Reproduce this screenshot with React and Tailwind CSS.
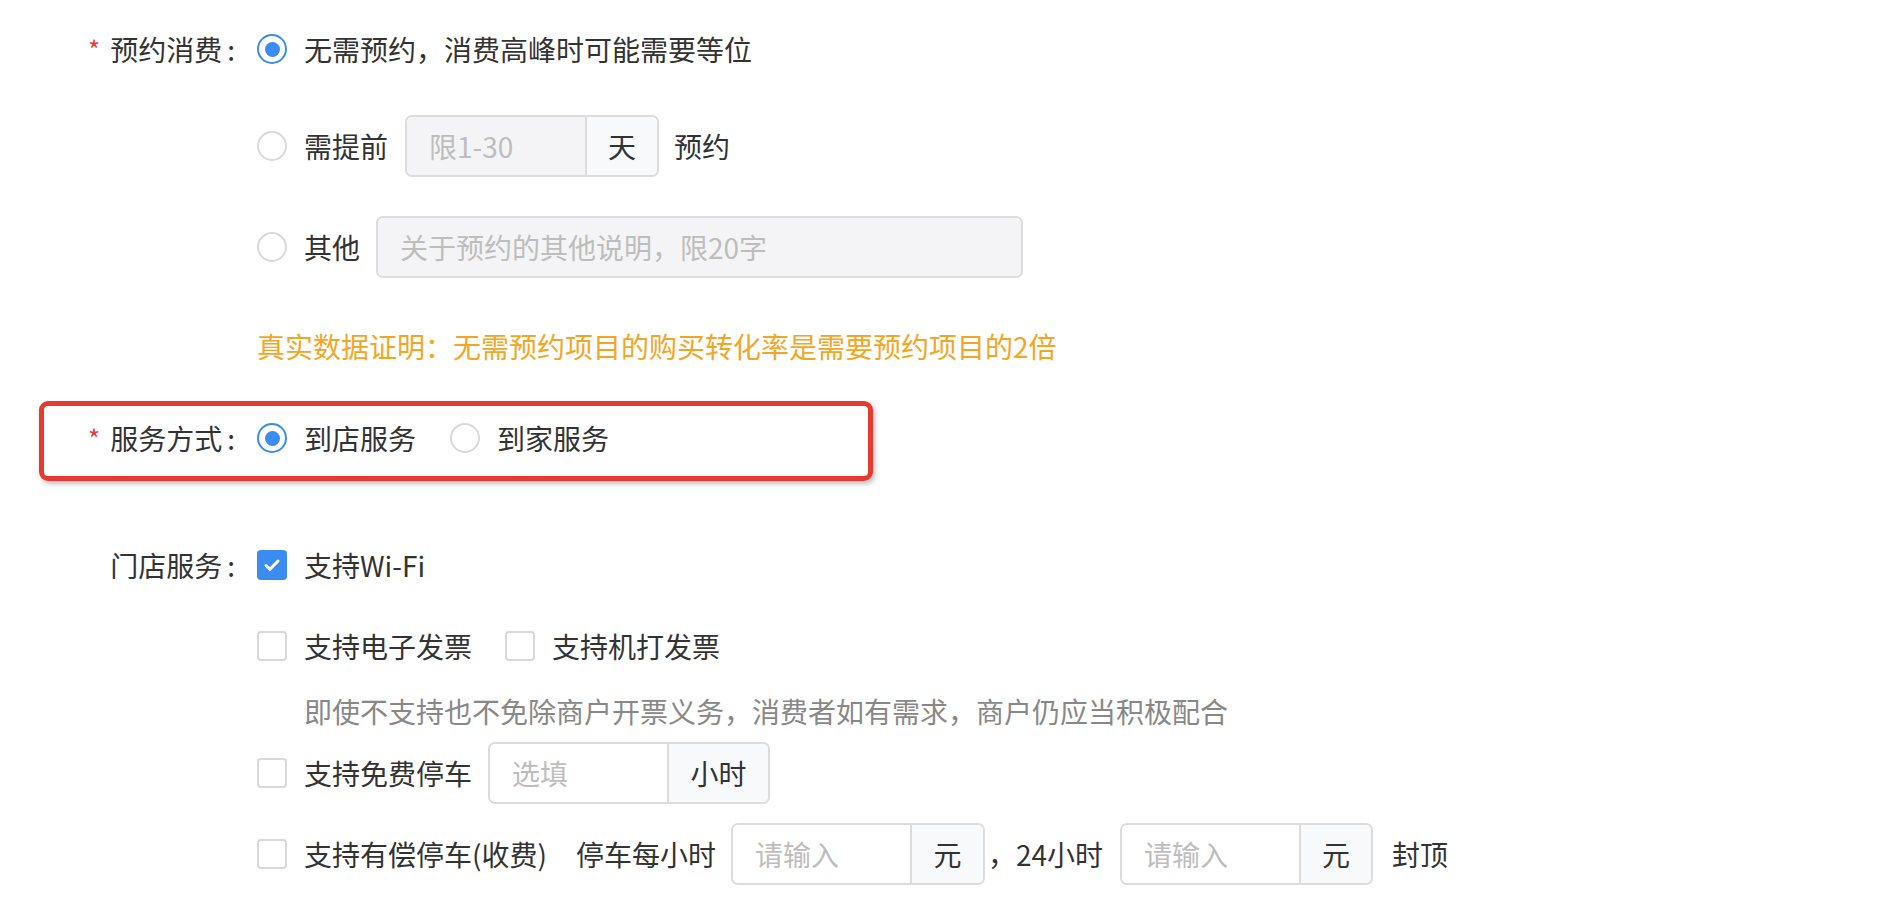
import React from 'react';

const font = { fontFamily: '"Noto Sans CJK SC", "Noto Sans", sans-serif' };

function Radio({ checked, className = '' }) {
  return checked ? (
    <span className={`w-[30px] h-[30px] rounded-full border-[2.5px] border-[#3b8cf0] flex items-center justify-center shrink-0 ${className}`}>
      <span className="block w-[15px] h-[15px] rounded-full bg-[#3b8cf0]" />
    </span>
  ) : (
    <span className={`block w-[30px] h-[30px] rounded-full border-2 border-[#d9d9d9] bg-white shrink-0 ${className}`} />
  );
}

function Checkbox({ checked, className = '' }) {
  return checked ? (
    <span className={`w-[30px] h-[30px] rounded-[4px] bg-[#3b8cf0] flex items-center justify-center shrink-0 ${className}`}>
      <svg width="20" height="20" viewBox="0 0 20 20" fill="none">
        <path d="M4 10.5l4 3.8L16 6" stroke="white" strokeWidth="3" strokeLinecap="round" strokeLinejoin="round" />
      </svg>
    </span>
  ) : (
    <span className={`block w-[30px] h-[30px] rounded-[4px] border-2 border-[#d9d9d9] bg-white shrink-0 ${className}`} />
  );
}

function Label({ text, required }) {
  return (
    <div className="w-[245px] shrink-0 flex justify-end items-center pr-[10px] text-[#333]">
      {required && <span className="text-[#e5413b] mr-[10px] text-[26px]">*</span>}
      <span>{text}</span>
      <span className="ml-[5px]">:</span>
    </div>
  );
}

function InputGroup({ placeholder, addon, inputW, addonW, disabled }) {
  return (
    <div className="flex h-[62px] border-2 border-[#dcdcdc] rounded-[7px] overflow-hidden shrink-0">
      <div
        className={`flex items-center pl-[22px] text-[#bdbdbd] ${disabled ? 'bg-[#f4f4f6]' : 'bg-white'}`}
        style={{ width: inputW }}
      >
        {placeholder}
      </div>
      {addon && (
        <div
          className="flex items-center justify-center border-l-2 border-[#dcdcdc] bg-[#f8f9fb] text-[#333]"
          style={{ width: addonW }}
        >
          {addon}
        </div>
      )}
    </div>
  );
}

export default function App() {
  return (
    <div className="w-[1892px] h-[922px] bg-white text-[28px] leading-none text-[#333] relative overflow-hidden" style={font}>
      <div className="flex flex-col">
        {/* 预约消费 */}
        <div className="flex items-center h-[62px] mt-[18px]">
          <Label text="预约消费" required />
          <div className="flex items-center ml-[12px] gap-[17px]">
            <Radio checked />
            <span>无需预约，消费高峰时可能需要等位</span>
          </div>
        </div>

        <div className="flex items-center h-[62px] mt-[35px] pl-[257px]">
          <Radio />
          <span className="ml-[17px]">需提前</span>
          <div className="ml-[17px]">
            <InputGroup placeholder="限1-30" addon="天" inputW={178} addonW={72} disabled />
          </div>
          <span className="ml-[15px]">预约</span>
        </div>

        <div className="flex items-center h-[62px] mt-[39px] pl-[257px]">
          <Radio />
          <span className="ml-[17px]">其他</span>
          <div className="ml-[16px]">
            <InputGroup placeholder="关于预约的其他说明，限20字" inputW={643} disabled />
          </div>
        </div>

        <div className="flex items-center h-[62px] mt-[37px] pl-[257px] text-[#f5a524]">
          真实数据证明：无需预约项目的购买转化率是需要预约项目的2倍
        </div>

        {/* 服务方式 */}
        <div className="flex items-center h-[62px] mt-[30px] relative">
          <div className="absolute left-[39px] top-[-6px] w-[834px] h-[80px] border-[5px] border-[#e63a2e] rounded-[9px] shadow-[2px_3px_5px_rgba(0,0,0,0.25)]" />
          <Label text="服务方式" required />
          <div className="flex items-center ml-[12px]">
            <Radio checked />
            <span className="ml-[17px]">到店服务</span>
            <Radio className="ml-[34px]" />
            <span className="ml-[17px]">到家服务</span>
          </div>
        </div>

        {/* 门店服务 */}
        <div className="flex items-center h-[62px] mt-[65px]">
          <Label text="门店服务" />
          <div className="flex items-center ml-[12px]">
            <Checkbox checked />
            <span className="ml-[17px]">支持Wi-Fi</span>
          </div>
        </div>

        <div className="flex items-center h-[62px] mt-[19px] pl-[257px]">
          <Checkbox />
          <span className="ml-[17px]">支持电子发票</span>
          <Checkbox className="ml-[33px]" />
          <span className="ml-[17px]">支持机打发票</span>
        </div>

        <div className="flex items-center h-[40px] mt-[14px] pl-[304px] text-[#888]">
          即使不支持也不免除商户开票义务，消费者如有需求，商户仍应当积极配合
        </div>

        <div className="flex items-center h-[62px] mt-[11px] pl-[257px]">
          <Checkbox />
          <span className="ml-[17px]">支持免费停车</span>
          <div className="ml-[16px]">
            <InputGroup placeholder="选填" addon="小时" inputW={177} addonW={101} />
          </div>
        </div>

        <div className="flex items-center h-[62px] mt-[19px] pl-[257px]">
          <Checkbox />
          <span className="ml-[17px]">支持有偿停车(收费)</span>
          <span className="ml-[29px]">停车每小时</span>
          <div className="ml-[15px]">
            <InputGroup placeholder="请输入" addon="元" inputW={177} addonW={73} />
          </div>
          <span className="ml-[3px]">，24小时</span>
          <div className="ml-[17px]">
            <InputGroup placeholder="请输入" addon="元" inputW={177} addonW={72} />
          </div>
          <span className="ml-[19px]">封顶</span>
        </div>
      </div>
    </div>
  );
}
